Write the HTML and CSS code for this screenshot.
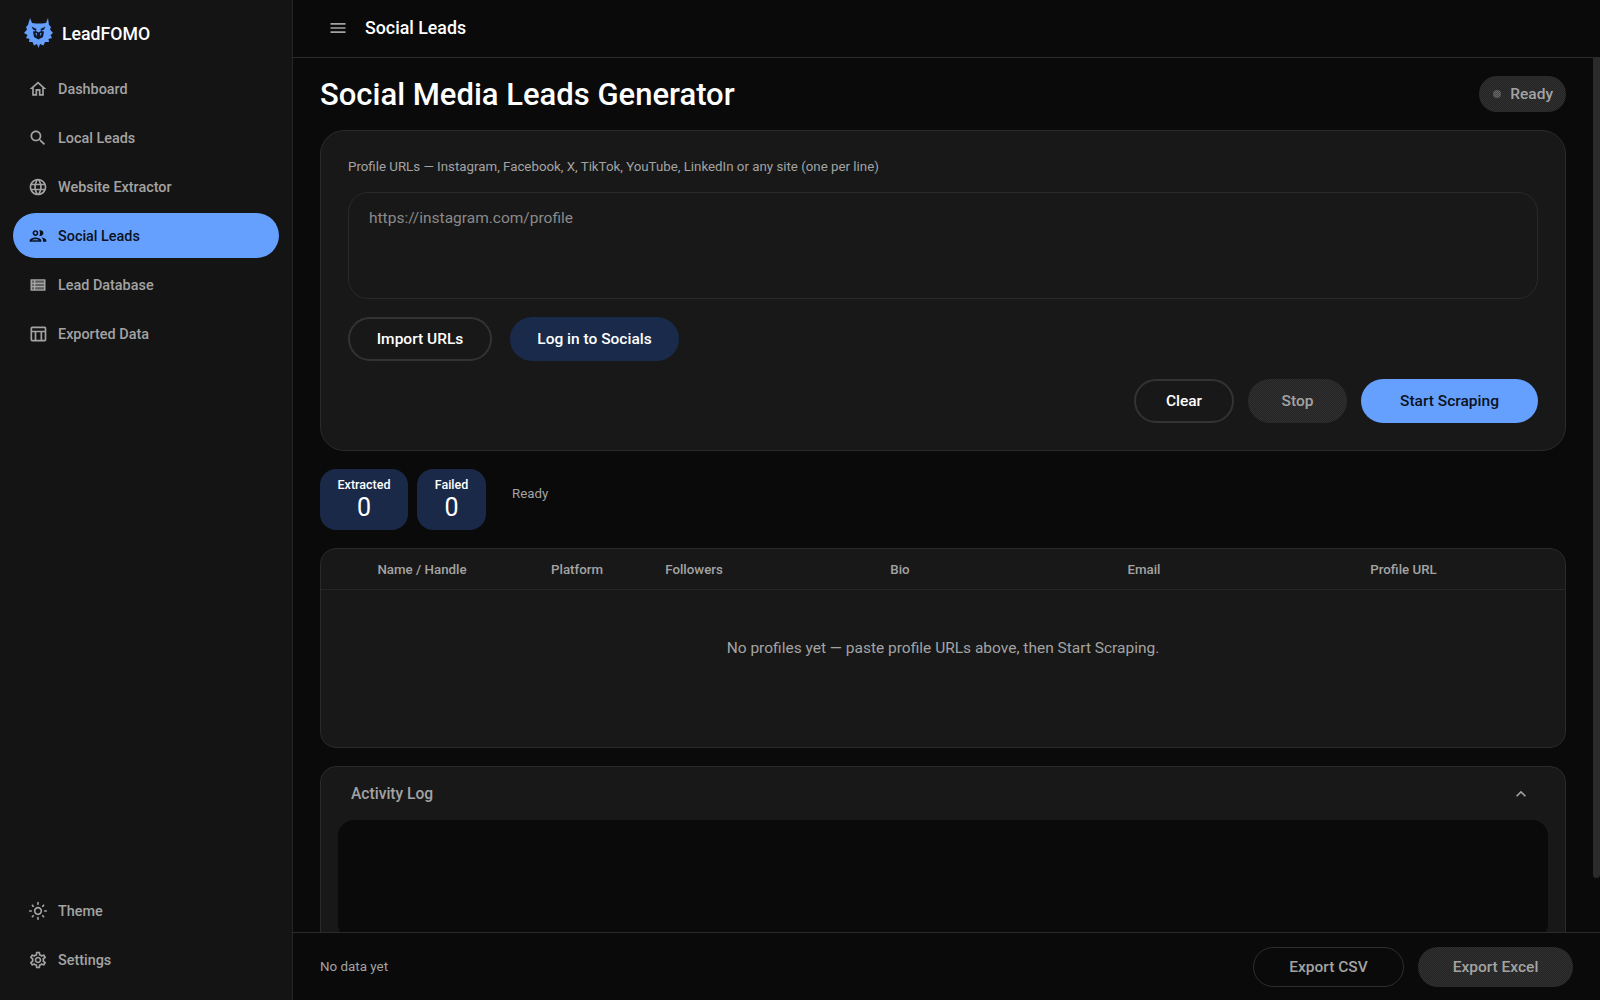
FILE: index.html
```html
<!DOCTYPE html>
<html lang="en">
<head>
<meta charset="utf-8">
<title>LeadFOMO - Social Leads</title>
<link rel="stylesheet" href="styles.css">
</head>
<body>
<div class="app">
  <aside class="sidebar">
    <div class="brand">
      <svg class="logo" viewBox="0 0 30 30" aria-hidden="true">
        <polygon fill="#66a0ff" points="6,0 8,5 12,5.5 18,5.5 22,5 24,0 25,7 27,9 26,11.5 29,15 26.5,17 28,20 24.5,21 25,24 21,24 19.5,27.5 16,26 14.5,30 13,26 10,27.5 8.5,24 5,24 5.5,21 2,20 3.5,17 0,15 3,11.5 2,9 4,7"/>
        <polygon fill="#10182a" points="7.5,8.5 12.5,11 12,13 9,11.5"/>
        <polygon fill="#10182a" points="21.5,8.5 16.5,11 17,13 20,11.5"/>
        <polygon fill="#10182a" points="9,13.5 12,13 14.5,14.5 17,13 20,13.5 19,19 14.5,21.5 10,19"/>
        <polygon fill="#66a0ff" points="11.5,15 13,15 12.3,18.5"/>
        <polygon fill="#66a0ff" points="16,15 17.5,15 16.7,18.5"/>
      </svg>
      <span class="brand-name">LeadFOMO</span>
    </div>
    <nav class="nav">
      <a class="nav-item"><svg class="icon" viewBox="0 0 24 24"><path d="M12 5.69l5 4.5V18h-2v-6H9v6H7v-7.81l5-4.5M12 3L2 12h3v8h6v-6h2v6h6v-8h3L12 3z"/></svg>Dashboard</a>
      <a class="nav-item"><svg class="icon" viewBox="0 0 24 24"><path d="M15.5 14h-.79l-.28-.27C15.41 12.59 16 11.11 16 9.5 16 5.91 13.09 3 9.5 3S3 5.91 3 9.5 5.91 16 9.5 16c1.61 0 3.09-.59 4.23-1.57l.27.28v.79l5 4.99L20.49 19l-4.99-5zm-6 0C7.01 14 5 11.99 5 9.5S7.01 5 9.5 5 14 7.01 14 9.5 11.99 14 9.5 14z"/></svg>Local Leads</a>
      <a class="nav-item"><svg class="icon" viewBox="0 0 24 24"><path d="M11.99 2C6.47 2 2 6.48 2 12s4.47 10 9.99 10C17.52 22 22 17.52 22 12S17.52 2 11.99 2zm6.93 6h-2.95c-.32-1.25-.78-2.45-1.38-3.56 1.84.63 3.37 1.91 4.33 3.56zM12 4.04c.83 1.2 1.48 2.53 1.91 3.96h-3.82c.43-1.43 1.08-2.76 1.91-3.96zM4.26 14C4.1 13.36 4 12.69 4 12s.1-1.36.26-2h3.38c-.08.66-.14 1.32-.14 2 0 .68.06 1.34.14 2H4.26zm.82 2h2.95c.32 1.25.78 2.45 1.38 3.56-1.84-.63-3.37-1.9-4.33-3.56zm2.95-8H5.08c.96-1.66 2.49-2.93 4.33-3.56C8.81 5.55 8.35 6.75 8.03 8zM12 19.96c-.83-1.2-1.48-2.53-1.91-3.96h3.82c-.43 1.43-1.08 2.76-1.91 3.96zM14.34 14H9.66c-.09-.66-.16-1.32-.16-2 0-.68.07-1.35.16-2h4.68c.09.65.16 1.32.16 2 0 .68-.07 1.34-.16 2zm.25 5.56c.6-1.11 1.06-2.31 1.38-3.56h2.95c-.96 1.65-2.49 2.93-4.33 3.56zM16.36 14c.08-.66.14-1.32.14-2 0-.68-.06-1.34-.14-2h3.38c.16.64.26 1.31.26 2s-.1 1.36-.26 2h-3.38z"/></svg>Website Extractor</a>
      <a class="nav-item active"><svg class="icon" viewBox="0 0 24 24"><path d="M9 13.75c-2.34 0-7 1.17-7 3.5V19h14v-1.75c0-2.33-4.66-3.5-7-3.5zM4.34 17c.84-.58 2.87-1.25 4.66-1.25s3.82.67 4.66 1.25H4.34zM9 12c1.93 0 3.5-1.57 3.5-3.5S10.93 5 9 5 5.5 6.57 5.5 8.5 7.07 12 9 12zm0-5c.83 0 1.5.67 1.5 1.5S9.83 10 9 10s-1.5-.67-1.5-1.5S8.17 7 9 7zm7.04 6.81c1.16.84 1.96 1.96 1.96 3.44V19h4v-1.75c0-2.02-3.5-3.17-5.96-3.44zM15 12c1.93 0 3.5-1.57 3.5-3.5S16.93 5 15 5c-.54 0-1.04.13-1.5.35.63.89 1 1.98 1 3.15s-.37 2.26-1 3.15c.46.22.96.35 1.5.35z"/></svg>Social Leads</a>
      <a class="nav-item"><svg class="icon" viewBox="0 0 24 24"><path fill-rule="evenodd" d="M3 5h18v14H3V5zm2 2v2h2V7H5zm4 0v2h10V7H9zm-4 4v2h2v-2H5zm4 0v2h10v-2H9zm-4 4v2h2v-2H5zm4 0v2h10v-2H9z"/><path class="icon-tint" d="M5 7h2v2H5zM9 7h10v2H9zM5 11h2v2H5zM9 11h10v2H9zM5 15h2v2H5zM9 15h10v2H9z"/></svg>Lead Database</a>
      <a class="nav-item"><svg class="icon" viewBox="0 0 24 24"><path d="M20 3H5c-1.1 0-2 .9-2 2v14c0 1.1.9 2 2 2h15c1.1 0 2-.9 2-2V5c0-1.1-.9-2-2-2zm0 2v3H5V5h15zm-5 14h-5v-9h5v9zM5 10h3v9H5v-9zm12 9v-9h3v9h-3z"/></svg>Exported Data</a>
    </nav>
    <nav class="nav nav-bottom">
      <a class="nav-item"><svg class="icon" viewBox="0 0 24 24"><path d="M12 9c1.65 0 3 1.35 3 3s-1.35 3-3 3-3-1.35-3-3 1.35-3 3-3m0-2c-2.76 0-5 2.24-5 5s2.24 5 5 5 5-2.24 5-5-2.24-5-5-5zM2 13h2c.55 0 1-.45 1-1s-.45-1-1-1H2c-.55 0-1 .45-1 1s.45 1 1 1zm18 0h2c.55 0 1-.45 1-1s-.45-1-1-1h-2c-.55 0-1 .45-1 1s.45 1 1 1zM11 2v2c0 .55.45 1 1 1s1-.45 1-1V2c0-.55-.45-1-1-1s-1 .45-1 1zm0 18v2c0 .55.45 1 1 1s1-.45 1-1v-2c0-.55-.45-1-1-1s-1 .45-1 1zM5.99 4.58c-.39-.39-1.03-.39-1.41 0-.39.39-.39 1.03 0 1.41l1.06 1.06c.39.39 1.03.39 1.41 0s.39-1.03 0-1.41L5.99 4.58zm12.37 12.37c-.39-.39-1.03-.39-1.41 0-.39.39-.39 1.03 0 1.41l1.06 1.06c.39.39 1.03.39 1.41 0 .39-.39.39-1.03 0-1.41l-1.06-1.06zm1.06-10.96c.39-.39.39-1.03 0-1.41-.39-.39-1.03-.39-1.41 0l-1.06 1.06c-.39.39-.39 1.03 0 1.41s1.03.39 1.41 0l1.06-1.06zM7.05 18.36c.39-.39.39-1.03 0-1.41-.39-.39-1.03-.39-1.41 0l-1.06 1.06c-.39.39-.39 1.03 0 1.41s1.03.39 1.41 0l1.06-1.06z"/></svg>Theme</a>
      <a class="nav-item"><svg class="icon" viewBox="0 0 24 24"><path d="M19.43 12.98c.04-.32.07-.64.07-.98 0-.34-.03-.66-.07-.98l2.11-1.65c.19-.15.24-.42.12-.64l-2-3.46c-.09-.16-.26-.25-.44-.25-.06 0-.12.01-.17.03l-2.49 1c-.52-.4-1.08-.73-1.69-.98l-.38-2.65C14.46 2.18 14.25 2 14 2h-4c-.25 0-.46.18-.49.42l-.38 2.65c-.61.25-1.17.59-1.69.98l-2.49-1c-.06-.02-.12-.03-.18-.03-.17 0-.34.09-.43.25l-2 3.46c-.13.22-.07.49.12.64l2.11 1.65c-.04.32-.07.65-.07.98 0 .33.03.66.07.98l-2.11 1.65c-.19.15-.24.42-.12.64l2 3.46c.09.16.26.25.44.25.06 0 .12-.01.17-.03l2.49-1c.52.4 1.08.73 1.69.98l.38 2.65c.03.24.24.42.49.42h4c.25 0 .46-.18.49-.42l.38-2.65c.61-.25 1.17-.59 1.69-.98l2.49 1c.06.02.12.03.18.03.17 0 .34-.09.43-.25l2-3.46c.12-.22.07-.49-.12-.64l-2.11-1.65zm-1.98-1.71c.04.31.05.52.05.73 0 .21-.02.43-.05.73l-.14 1.13.89.7 1.08.84-.7 1.21-1.27-.51-1.04-.42-.9.68c-.43.32-.84.56-1.25.73l-1.06.43-.16 1.13-.2 1.35h-1.4l-.19-1.35-.16-1.13-1.06-.43c-.43-.18-.83-.41-1.23-.71l-.91-.7-1.06.43-1.27.51-.7-1.21 1.08-.84.89-.7-.14-1.13c-.03-.31-.05-.54-.05-.74s.02-.43.05-.73l.14-1.13-.89-.7-1.08-.84.7-1.21 1.27.51 1.04.42.9-.68c.43-.32.84-.56 1.25-.73l1.06-.43.16-1.13.2-1.35h1.39l.19 1.35.16 1.13 1.06.43c.43.18.83.41 1.23.71l.91.7 1.06-.43 1.27-.51.7 1.21-1.07.85-.89.7.14 1.13zM12 8c-2.21 0-4 1.79-4 4s1.79 4 4 4 4-1.79 4-4-1.79-4-4-4zm0 6c-1.1 0-2-.9-2-2s.9-2 2-2 2 .9 2 2-.9 2-2 2z"/></svg>Settings</a>
    </nav>
  </aside>
  <div class="main">
    <header class="topbar">
      <svg class="menu-icon" viewBox="0 0 24 24"><path d="M3 18h18v-2H3v2zm0-5h18v-2H3v2zm0-7v2h18V6H3z"/></svg>
      <span class="topbar-title">Social Leads</span>
    </header>
    <div class="content-wrap">
      <div class="content">
        <div class="title-row">
          <h1 class="page-title">Social Media Leads Generator</h1>
          <div class="chip"><span class="chip-dot"></span>Ready</div>
        </div>
        <section class="card input-card">
          <label class="field-label">Profile URLs — Instagram, Facebook, X, TikTok, YouTube, LinkedIn or any site (one per line)</label>
          <textarea class="url-input" placeholder="https://instagram.com/profile"></textarea>
          <div class="row-left">
            <button class="btn btn-outline btn-import">Import URLs</button>
            <button class="btn btn-navy">Log in to Socials</button>
          </div>
          <div class="row-right">
            <button class="btn btn-outline btn-clear">Clear</button>
            <button class="btn btn-disabled btn-stop">Stop</button>
            <button class="btn btn-primary">Start Scraping</button>
          </div>
        </section>
        <div class="stats">
          <div class="stat stat-extracted"><span class="stat-label">Extracted</span><span class="stat-value">0</span></div>
          <div class="stat stat-failed"><span class="stat-label">Failed</span><span class="stat-value">0</span></div>
          <span class="stats-status">Ready</span>
        </div>
        <section class="card table-card">
          <div class="table-head">
            <span>Name / Handle</span><span>Platform</span><span>Followers</span><span>Bio</span><span>Email</span><span>Profile URL</span>
          </div>
          <div class="table-empty">No profiles yet — paste profile URLs above, then Start Scraping.</div>
        </section>
        <section class="card log-card">
          <div class="log-head">
            <span class="log-title">Activity Log</span>
            <svg class="chevron" viewBox="0 0 24 24"><path d="M12 8l-6 6 1.41 1.41L12 10.83l4.59 4.58L18 14z"/></svg>
          </div>
          <div class="log-body"></div>
        </section>
      </div>
      <div class="scroll-thumb"></div>
    </div>
    <footer class="footer">
      <span class="footer-status">No data yet</span>
      <div class="footer-actions">
        <button class="btn btn-foot btn-foot-outline">Export CSV</button>
        <button class="btn btn-foot btn-disabled btn-excel">Export Excel</button>
      </div>
    </footer>
  </div>
</div>
</body>
</html>
```
FILE: styles.css
```css
* { box-sizing: border-box; }
html, body { margin: 0; height: 100%; }
body {
  background: #0a0a0a;
  color: #fff;
  font-family: Roboto, "Liberation Sans", sans-serif;
  overflow: hidden;
}
.app { display: flex; height: 1000px; }

/* Sidebar */
.sidebar {
  width: 293px;
  flex: none;
  background: #141414;
  border-right: 1px solid #262626;
  display: flex;
  flex-direction: column;
  padding: 0 13px 18px;
}
.brand {
  display: flex;
  align-items: center;
  height: 66px;
  padding-left: 11px;
  gap: 8px;
}
.logo { width: 30px; height: 30px; flex: none; }
.brand-name { font-size: 17.7px; font-weight: 500; padding-top: 2px; }
.nav { display: flex; flex-direction: column; gap: 4px; }
.nav-bottom { margin-top: auto; }
.nav-item {
  display: flex;
  align-items: center;
  gap: 10px;
  height: 45px;
  padding: 2px 0 0 15px;
  border-radius: 23px;
  font-size: 14.4px;
  font-weight: 500;
  color: #a3a3a3;
}
.icon { width: 20px; height: 20px; fill: #a3a3a3; flex: none; margin-top: -2px; }
.icon-tint { opacity: .5; }
.nav-item.active { background: #66a0ff; color: #0a1222; }
.nav-item.active .icon { fill: #0a1222; }

/* Main */
.main { flex: 1; min-width: 0; display: flex; flex-direction: column; }
.topbar {
  height: 58px;
  flex: none;
  display: flex;
  align-items: center;
  gap: 17px;
  padding: 0 0 2px 35px;
  border-bottom: 1px solid #2a2a2a;
}
.menu-icon { width: 20px; height: 20px; fill: #a3a3a3; }
.topbar-title { font-size: 17.8px; font-weight: 500; }
.content-wrap { flex: 1; min-height: 0; position: relative; }
.content {
  height: 100%;
  overflow: hidden;
  padding: 18px 34px 0 27px;
  display: flex;
  flex-direction: column;
}
.scroll-thumb {
  position: absolute;
  top: 0;
  right: 0;
  width: 7px;
  height: 820px;
  background: #2b2b2b;
  border-radius: 0 0 4px 4px;
}
.title-row {
  display: flex;
  align-items: center;
  justify-content: space-between;
  flex: none;
  height: 35px;
  margin-bottom: 19px;
}
.page-title { margin: 1px 0 0; font-size: 31px; font-weight: 500; line-height: 35px; }
.chip {
  display: flex;
  align-items: center;
  gap: 9px;
  height: 36px;
  padding: 0 13px 0 14px;
  border-radius: 18px;
  font-size: 15.5px;
  font-weight: 500;
  color: #a3a3a3;
  background: repeating-conic-gradient(#303030 0 25%, #242424 0 50%) 0 0 / 2px 2px;
}
.chip-dot {
  width: 8px;
  height: 8px;
  border-radius: 50%;
  background: repeating-conic-gradient(#6a6a6a 0 25%, #444 0 50%) 0 0 / 2px 2px;
}
.card {
  flex: none;
  background: #181818;
  border: 1px solid #2a2a2a;
}
.input-card {
  height: 321px;
  border-radius: 24px;
  padding: 26px 27px 0;
  display: flex;
  flex-direction: column;
}
.field-label {
  font-size: 13.3px;
  line-height: 20px;
  color: #a3a3a3;
  margin-bottom: 15px;
}
.url-input {
  display: block;
  width: 100%;
  height: 107px;
  flex: none;
  resize: none;
  background: transparent;
  border: 1px solid #2a2a2a;
  border-radius: 20px;
  padding: 15px 20px;
  color: #fff;
  font-family: inherit;
  font-size: 15.5px;
  line-height: 20px;
  outline: none;
}
.url-input::placeholder { color: #8a8a8a; opacity: 1; }
.row-left { display: flex; gap: 18px; margin-top: 18px; }
.row-right { display: flex; justify-content: flex-end; gap: 14px; margin-top: 18px; }
.btn {
  height: 44px;
  border-radius: 22px;
  border: 0;
  font-family: inherit;
  font-size: 15.5px;
  font-weight: 500;
  padding: 0;
  color: #fff;
  background: transparent;
}
.btn-outline { border: 2px solid #333; }
.btn-import { width: 144px; }
.btn-navy { width: 169px; background: #1a2a4a; }
.btn-clear { width: 100px; }
.btn-stop { width: 99px; }
.btn-disabled {
  color: #a3a3a3;
  background: repeating-conic-gradient(#303030 0 25%, #242424 0 50%) 0 0 / 2px 2px;
}
.btn-primary { width: 177px; background: #66a0ff; color: #0a1222; }

/* Stats */
.stats { display: flex; align-items: center; flex: none; margin-top: 18px; height: 61px; gap: 9px; }
.stat {
  height: 61px;
  border-radius: 16px;
  background: #1a2947;
  display: flex;
  flex-direction: column;
  align-items: center;
  padding-top: 8px;
}
.stat-extracted { width: 88px; }
.stat-failed { width: 69px; }
.stat-label { font-size: 12.5px; font-weight: 500; line-height: 16px; }
.stat-value { font-size: 25px; line-height: 28px; padding-top: 1px; }
.stats-status { font-size: 13.3px; color: #a3a3a3; margin: 0 0 12px 17px; }

/* Table */
.table-card { margin-top: 18px; height: 200px; border-radius: 16px; }
.table-head {
  display: grid;
  grid-template-columns: 196px 114px 120px 292px 196px 1fr;
  padding-left: 3px;
  height: 41px;
  align-items: center;
  border-bottom: 1px solid #262626;
  font-size: 13.3px;
  font-weight: 500;
  color: #a3a3a3;
  text-align: center;
}
.table-empty {
  height: 116px;
  display: flex;
  align-items: center;
  justify-content: center;
  font-size: 15.5px;
  color: #a3a3a3;
}

/* Log */
.log-card { margin-top: 18px; border-radius: 16px; padding: 0 17px 18px; }
.log-head {
  height: 53px;
  display: flex;
  align-items: center;
  justify-content: space-between;
  padding: 0 17px 0 13px;
}
.log-title { font-size: 15.6px; font-weight: 500; color: #a3a3a3; }
.chevron { width: 20px; height: 20px; fill: #a3a3a3; }
.log-body { height: 120px; background: #0a0a0a; border-radius: 16px; }

/* Footer */
.footer {
  height: 68px;
  flex: none;
  display: flex;
  align-items: center;
  justify-content: space-between;
  padding: 0 27px 0 27px;
  border-top: 1px solid #2a2a2a;
  background: #0a0a0a;
  position: relative;
}
.footer-status { font-size: 13.4px; color: #a3a3a3; }
.footer-actions { display: flex; gap: 14px; }
.btn-foot { height: 40px; border-radius: 20px; color: #a3a3a3; }
.btn-foot-outline { width: 151px; border: 1px solid #2e2e2e; }
.btn-excel { width: 155px; }
```
